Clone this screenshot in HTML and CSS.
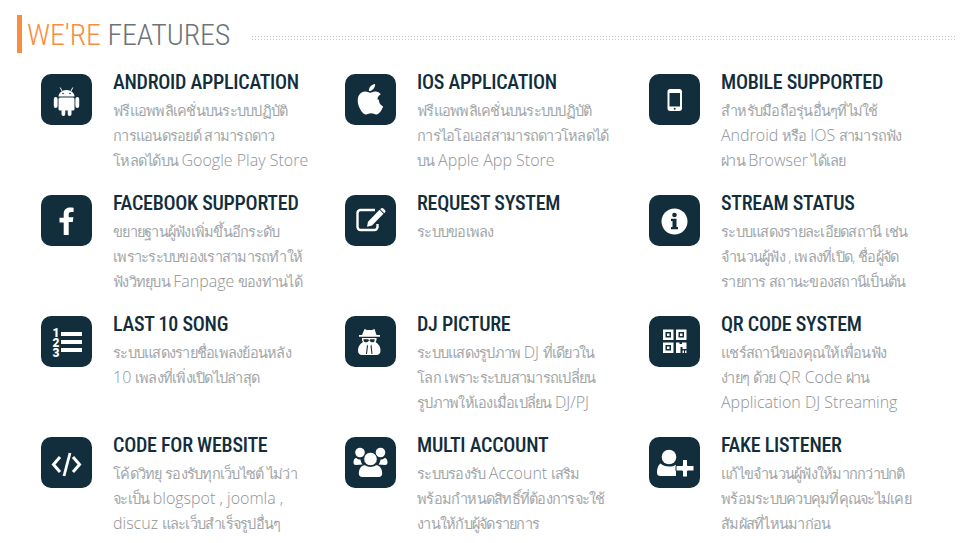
FILE: index.html
```html
<!DOCTYPE html>
<html lang="th">
<head>
<meta charset="utf-8">
<title>We're Features</title>
<link rel="stylesheet" href="styles.css">
</head>
<body>
<section class="page">
  <header class="head">
    <h1 class="head-title"><span class="accent">WE'RE</span> FEATURES</h1>
    <div class="head-rule"></div>
  </header>
  <div class="grid">
    <article class="item">
      <div class="icon"><svg viewBox="0 0 51 51"><path d="M21 17l-1.800-3.500M30 17l1.800-3.500" stroke="#fff" stroke-width="1"/><path d="M17.500 22.500c0-3.500 3.500-6.500 8-6.500s8 3 8 6.500z"/><rect x="17.500" y="23.500" width="16" height="13" rx="1.500"/><rect x="12.800" y="23" width="3.800" height="11" rx="1.900"/><rect x="34.400" y="23" width="3.800" height="11" rx="1.900"/><rect x="20.500" y="35" width="3.800" height="7" rx="1.900"/><rect x="26.700" y="35" width="3.800" height="7" rx="1.900"/><circle cx="22" cy="19.500" r=".8" class="cut"/><circle cx="29" cy="19.500" r=".8" class="cut"/></svg></div>
      <div class="body"><h2>ANDROID APPLICATION</h2><p>ฟรีแอพพลิเคชั่นบนระบบปฏิบัติ<br>การแอนดรอยด์ สามารถดาว<br>โหลดได้บน <span class="en">Google Play Store</span></p></div>
    </article>
    <article class="item">
      <div class="icon"><svg viewBox="0 0 51 51"><path d="M32.500 25.500c0-2.600 1.200-4 3.300-5.300-1.200-1.700-3-2.700-5.300-2.800-2.200-.2-4.200 1.300-5.400 1.300-1.300 0-3-1.300-4.800-1.200-3.700.1-7.600 3-7.600 9 0 1.800.3 3.600 1 5.500.9 2.500 4 8.500 7.300 8.400 1.700 0 3-1.200 5.100-1.200s3.300 1.200 5.200 1.200c3.300 0 6-5.600 6.800-8-4.400-2.100-4.100-6.100-4.100-6.600z"/><path d="M28.500 14.800c1.800-2.100 1.600-4.100 1.600-4.800-1.600.1-3.500 1.100-4.500 2.300-1.200 1.300-1.900 3-1.700 4.800 1.700.1 3.300-.8 4.600-2.300z"/></svg></div>
      <div class="body"><h2>IOS APPLICATION</h2><p>ฟรีแอพพลิเคชั่นบนระบบปฏิบัติ<br>การไอโอเอสสามารถดาวโหลดได้<br>บน <span class="en">Apple App Store</span></p></div>
    </article>
    <article class="item">
      <div class="icon"><svg viewBox="0 0 51 51"><path fill-rule="evenodd" d="M21 15h9.500c1.500 0 2.500 1 2.500 2.500v17c0 1.500-1 2.500-2.500 2.500H21c-1.500 0-2.500-1-2.500-2.500v-17c0-1.500 1-2.500 2.500-2.500zM20.500 19v13.500H31V19z"/><circle cx="25.700" cy="34.800" r="1" class="cut"/></svg></div>
      <div class="body"><h2>MOBILE SUPPORTED</h2><p>สำหรับมือถือรุ่นอื่นๆที่ไม่ใช้<br><span class="en">Android</span> หรือ <span class="en">IOS</span> สามารถฟัง<br>ผ่าน <span class="en">Browser</span> ได้เลย</p></div>
    </article>
    <article class="item">
      <div class="icon"><svg viewBox="0 0 51 51"><path d="M22.700 40V27.500h-4.200v-4.800h4.200V19c0-4.300 2.500-6.500 6.200-6.500 1.800 0 3.200.1 3.700.2v4.400h-2.500c-2 0-2.400 1-2.400 2.400v2.700h4.700l-.6 4.800h-4.100V40z"/></svg></div>
      <div class="body"><h2>FACEBOOK SUPPORTED</h2><p>ขยายฐานผู้ฟังเพิ่มขึ้นอีกระดับ<br>เพราะระบบของเราสามารถทำให้<br>ฟังวิทยุบน <span class="en">Fanpage</span> ของท่านได้</p></div>
    </article>
    <article class="item">
      <div class="icon"><svg viewBox="0 0 51 51"><path d="M32.500 29v3a3 3 0 0 1-3 3H15.500a3 3 0 0 1-3-3V18a3 3 0 0 1 3-3H30" fill="none" stroke="#fff" stroke-width="2.400"/><path d="M34.500 14.800l4 4L27 30.500l-5 1.200 1-5z"/><path d="M35.800 13.500c.8-.8 1.800-.8 2.600 0l1.500 1.500c.8.800.8 1.800 0 2.600l-.6.600-4-4z"/></svg></div>
      <div class="body"><h2>REQUEST SYSTEM</h2><p>ระบบขอเพลง</p></div>
    </article>
    <article class="item">
      <div class="icon"><svg viewBox="0 0 51 51"><circle cx="25.500" cy="26.500" r="13"/><circle cx="25.500" cy="20" r="2.300" class="cut"/><path class="cut" d="M22 23.800h5.500V32H29v2.200h-7V32h1.500v-6H22z"/></svg></div>
      <div class="body"><h2>STREAM STATUS</h2><p>ระบบแสดงรายละเอียดสถานี เช่น<br>จำนวนผู้ฟัง , เพลงที่เปิด, ชื่อผู้จัด<br>รายการ สถานะของสถานีเป็นต้น</p></div>
    </article>
    <article class="item">
      <div class="icon"><svg viewBox="0 0 51 51"><rect x="20" y="16" width="21" height="4"/><rect x="20" y="24" width="21" height="4"/><rect x="20" y="32" width="21" height="4"/><text class="num" x="11.500" y="20.500">1</text><text class="num" x="11.500" y="30.500">2</text><text class="num" x="11.500" y="40.500">3</text></svg></div>
      <div class="body"><h2>LAST 10 SONG</h2><p>ระบบแสดงรายชื่อเพลงย้อนหลัง<br><span class="en">10</span> เพลงที่เพิ่งเปิดไปล่าสุด</p></div>
    </article>
    <article class="item">
      <div class="icon"><svg viewBox="0 0 51 51"><path d="M19.500 13l2.500 1h5l2.500-1 2 6h3.500v1.800h-21V19H17z"/><path d="M17 22h14.500c.3 1.500-.2 3-1 4 3.500 2 5 5 5 8.500 0 2.800-1.500 4.500-4 4.500H17c-2.500 0-4-1.700-4-4.500 0-3.500 1.500-6.500 5-8.500-.8-1-1.300-2.500-1-4z"/><path class="cut" d="M18.500 23.200h4.500l1.300 1 1.300-1h4v1.300c0 1-.9 1.800-2.100 1.800s-2.500-.8-2.700-1.800h-1c-.2 1-1.500 1.800-2.700 1.800s-2.600-.8-2.600-1.800z"/><path class="cut" d="M22 28.500l1 1.500-1 8h-1zM26.500 28.500l-1 1.500 1 8h1z"/></svg></div>
      <div class="body"><h2>DJ PICTURE</h2><p>ระบบแสดงรูปภาพ <span class="en">DJ</span> ที่เดียวใน<br>โลก เพราะระบบสามารถเปลี่ยน<br>รูปภาพให้เองเมื่อเปลี่ยน <span class="en">DJ/PJ</span></p></div>
    </article>
    <article class="item">
      <div class="icon"><svg viewBox="0 0 51 51"><path fill-rule="evenodd" d="M14 13.500h10.500V24H14zM16.500 16v5.500H22V16zM27 13.500h10.500V24H27zM29.500 16v5.500H35V16zM14 26.500h10.500V37H14zM16.500 29v5.500H22V29z"/><rect x="18" y="17.500" width="2.500" height="2.500"/><rect x="31" y="17.500" width="2.500" height="2.500"/><rect x="18" y="30.500" width="2.500" height="2.500"/><path d="M27 26.500h3.500V28H33v-1.500h4.500v6.500h-4V31h-2v6H27zM33.500 34.500H35V37h-1.500zM36 34.500h1.500V37H36z"/></svg></div>
      <div class="body"><h2>QR CODE SYSTEM</h2><p>แชร์สถานีของคุณให้เพื่อนฟัง<br>ง่ายๆ ด้วย <span class="en">QR Code</span> ผ่าน<br><span class="en">Application DJ Streaming</span></p></div>
    </article>
    <article class="item">
      <div class="icon"><svg viewBox="0 0 51 51"><path d="M19 20l-6.500 7.500L19 35M32 20l6.500 7.500L32 35" fill="none" stroke="#fff" stroke-width="3"/><path d="M29 16l-6 23" fill="none" stroke="#fff" stroke-width="2.800"/></svg></div>
      <div class="body"><h2>CODE FOR WEBSITE</h2><p>โค้ดวิทยุ รองรับทุกเว็บไซต์ ไม่ว่า<br>จะเป็น <span class="en">blogspot , joomla ,</span><br><span class="en">discuz</span> และเว็บสำเร็จรูปอื่นๆ</p></div>
    </article>
    <article class="item">
      <div class="icon"><svg viewBox="0 0 51 51"><circle cx="15" cy="15.500" r="4.800"/><circle cx="35.500" cy="15.500" r="4.800"/><path d="M11 28c-1.500 0-2.500-.8-2.500-2.500 0-2.500 1-4.500 3-4.500 1 1 2.500 1.500 4 1.500.3 2 .8 3.500 2 5zM40 28c1.500 0 2.500-.8 2.500-2.500 0-2.500-1-4.500-3-4.500-1 1-2.500 1.500-4 1.500-.3 2-.8 3.500-2 5z"/><circle cx="25.500" cy="22" r="6.800" stroke="#122d3b" stroke-width="1"/><path d="M16.500 29.500c1-1 2-1.300 3.500-1.300 3.300 2.300 7.700 2.300 11 0 1.500 0 2.500.3 3.500 1.300 2 2 2.700 4.500 2.700 7 0 2.200-1.400 3.500-3.200 3.500H17c-1.800 0-3.200-1.300-3.200-3.500 0-2.500.7-5 2.700-7z"/></svg></div>
      <div class="body"><h2>MULTI ACCOUNT</h2><p>ระบบรองรับ <span class="en">Account</span> เสริม<br>พร้อมกำหนดสิทธิ์ที่ต้องการจะใช้<br>งานให้กับผู้จัดรายการ</p></div>
    </article>
    <article class="item">
      <div class="icon"><svg viewBox="0 0 51 51"><circle cx="20" cy="20" r="7.300"/><path d="M11.500 26.500c2 2 5 3 8.500 3 2.500 0 5-.5 7-1.800V39H11.500c-2.200 0-3.500-1.200-3.500-3.300 0-4 1-7.500 3.500-9.200z"/><path d="M33.500 22.500h5v6h6.500v5.500h-6.500v6h-5v-6H27v-5.500h6.500z" stroke="#122d3b" stroke-width="1"/></svg></div>
      <div class="body"><h2>FAKE LISTENER</h2><p>แก้ไขจำนวนผู้ฟังให้มากกว่าปกติ<br>พร้อมระบบควบคุมที่คุณจะไม่เคย<br>สัมผัสที่ไหนมาก่อน</p></div>
    </article>
  </div>
</section>
</body>
</html>
```
FILE: styles.css
```css
* { box-sizing: border-box; }
html, body { margin: 0; background: #fff; }
.page {
  width: 967px;
  height: 543px;
  padding: 15px 10px 0 17px;
  overflow: hidden;
  font-family: "Open Sans", "Noto Sans", sans-serif;
}
.head {
  display: flex;
  align-items: center;
  height: 38px;
  border-left: 5px solid #f98d3d;
  padding-left: 5px;
  gap: 21px;
}
.head-title {
  margin: 2px 0 0;
  font-family: "Roboto", sans-serif;
  font-weight: 300;
  font-stretch: 75%;
  font-size: 30px;
  letter-spacing: -0.15px;
  line-height: 38px;
  color: #6d7378;
  white-space: nowrap;
}
.accent { color: #f98d3d; }
.head-rule {
  flex: 1;
  height: 5px;
  margin-top: 6px;
  background-image: radial-gradient(circle, #c8c8c8 0.7px, transparent 0.8px);
  background-size: 3px 3px;
}
.grid {
  display: grid;
  grid-template-columns: repeat(3, 304px);
  grid-auto-rows: 121px;
  padding: 21px 0 0 24px;
}
.item { display: flex; gap: 21px; }
.icon {
  flex: none;
  width: 51px;
  height: 51px;
  border-radius: 10px;
  background: #122d3b;
}
.icon svg { display: block; width: 51px; height: 51px; fill: #fff; }
.icon .cut { fill: #122d3b; }
.icon .num {
  font-family: "Roboto", sans-serif;
  font-weight: 900;
  font-size: 12px;
}
.body { min-width: 0; white-space: nowrap; }
h2 {
  margin: -4px 0 0;
  font-family: "Roboto", sans-serif;
  font-weight: 500;
  font-stretch: 75%;
  font-size: 20px;
  letter-spacing: -0.25px;
  line-height: 24px;
  color: #122d3b;
}
p {
  margin: 4px 0 0;
  font-family: "Open Sans", "Noto Sans", sans-serif;
  font-weight: 300;
  font-size: 14.5px;
  letter-spacing: -0.75px;
  word-spacing: 0.5px;
  line-height: 25px;
  color: #a2a6a8;
}
.en {
  font-size: 16px;
  letter-spacing: 0;
  word-spacing: 0;
  color: #8f9396;
}
```
